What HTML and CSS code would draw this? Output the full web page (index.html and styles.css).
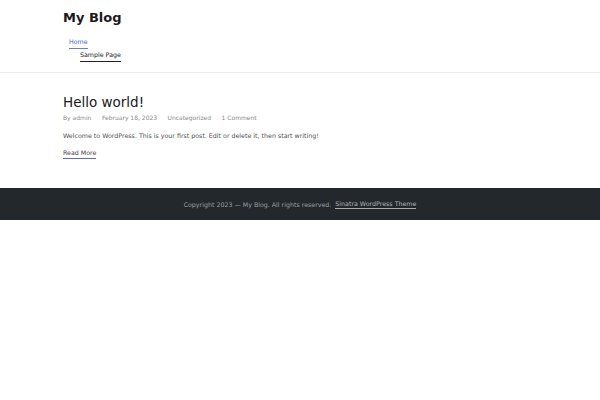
FILE: index.html
```html
<!DOCTYPE html>
<html>
<head>
<meta charset="utf-8">
<link rel="stylesheet" href="styles.css">
</head>
<body>
<header class="site-header">
  <div class="container">
    <div class="site-title">My Blog</div>
    <nav class="nav">
      <a class="nav-home" href="#">Home</a>
      <a class="nav-sample" href="#">Sample Page</a>
    </nav>
  </div>
</header>
<main class="content">
  <div class="container">
    <article class="post">
      <h2 class="post-title">Hello world!</h2>
      <div class="meta">
        <span>By admin</span>
        <span>February 18, 2023</span>
        <span>Uncategorized</span>
        <span>1 Comment</span>
      </div>
      <p class="excerpt">Welcome to WordPress. This is your first post. Edit or delete it, then start writing!</p>
      <a class="read-more" href="#">Read More</a>
    </article>
  </div>
</main>
<footer class="site-footer">
  <span>Copyright 2023 — My Blog. All rights reserved.</span>
  <a class="theme-link" href="#">Sinatra WordPress Theme</a>
</footer>
</body>
</html>
```
FILE: styles.css
```css
* { box-sizing: border-box; }
body {
  margin: 0;
  font-family: "DejaVu Sans", sans-serif;
  color: #131315;
  background: #fff;
}
a { text-decoration: none; }
.container { padding-left: 63px; }
.site-header {
  border-bottom: 1px solid #ececec;
  padding-top: 9px;
  height: 73px;
}
.site-title {
  font-size: 13px;
  font-weight: bold;
  line-height: 18px;
  color: #1a1a1c;
}
.nav {
  display: flex;
  flex-direction: column;
  align-items: flex-start;
  margin-top: 10px;
  font-size: 6.3px;
}
.nav-home {
  margin-left: 6px;
  color: #4a5fc8;
  padding-bottom: 1.5px;
  border-bottom: 1px solid #6a7bd0;
  line-height: 9px;
}
.nav-sample {
  margin-left: 17px;
  margin-top: 1px;
  color: #222;
  padding-bottom: 2.5px;
  border-bottom: 1.5px solid #222;
  line-height: 9px;
}
.content { padding-top: 21px; height: 115px; }
.post-title {
  margin: 0;
  font-size: 13.5px;
  font-weight: normal;
  line-height: 17px;
  color: #1a1a1c;
}
.meta {
  display: flex;
  gap: 10.5px;
  font-size: 6px;
  color: #8a8a8a;
  margin-top: 3px;
}
.excerpt {
  margin: 11px 0 0;
  font-size: 6.3px;
  color: #505050;
}
.read-more {
  display: inline-block;
  margin-top: 10px;
  font-size: 6.3px;
  color: #444;
  border-bottom: 1px solid #5a6bc8;
  padding-bottom: 2px;
}
.site-footer {
  background: #23282d;
  height: 32px;
  display: flex;
  justify-content: center;
  align-items: center;
  gap: 4px;
  font-size: 6.3px;
  color: #9aa0a6;
}
.theme-link {
  color: #b0b4b9;
  border-bottom: 1px solid #a8adb3;
  padding-bottom: 1px;
}
```
